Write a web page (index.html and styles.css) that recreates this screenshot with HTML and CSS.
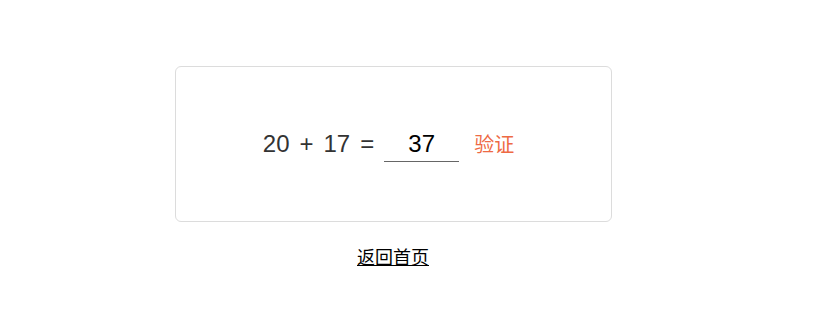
FILE: index.html
```html
<!DOCTYPE html>
<html lang="zh-CN">
<head>
<meta charset="utf-8">
<title>验证</title>
<link rel="stylesheet" href="styles.css">
</head>
<body>
<main class="page">
  <section class="card">
    <form class="captcha" onsubmit="return false;">
      <span class="term">20</span>
      <span class="op">+</span>
      <span class="term">17</span>
      <span class="op">=</span>
      <input class="answer" type="text" value="37">
      <button class="verify" type="submit">验证</button>
    </form>
  </section>
  <a class="home" href="#">返回首页</a>
</main>
</body>
</html>
```

FILE: styles.css
```css
html, body {
  margin: 0;
  padding: 0;
  background: #fff;
}

body {
  font-family: "Liberation Sans", "Noto Sans CJK SC", Arial, sans-serif;
}

.page {
  width: 786px;
  padding-top: 66px;
  display: flex;
  flex-direction: column;
  align-items: center;
}

.card {
  box-sizing: border-box;
  width: 437px;
  height: 156px;
  border: 1px solid #dcdcdc;
  border-radius: 6px;
  padding-top: 3px;
  display: flex;
  align-items: center;
  justify-content: center;
}

.captcha {
  display: flex;
  align-items: baseline;
  gap: 0;
  margin: 0;
  font-size: 24px;
  color: #333;
}

.term,
.op {
  line-height: 28px;
}

.term + .op,
.op + .term {
  margin-left: 10px;
}

.answer {
  box-sizing: border-box;
  width: 75px;
  margin-left: 10px;
  padding: 0 0 3px;
  border: none;
  border-bottom: 1px solid #666;
  background: transparent;
  font-family: "Liberation Sans", Arial, sans-serif;
  font-size: 24px;
  line-height: 28px;
  color: #000;
  text-align: center;
  outline: none;
}

.verify {
  margin-left: 15px;
  padding: 0 9px 0 0;
  border: none;
  background: transparent;
  font-family: "Noto Sans CJK SC", sans-serif;
  font-size: 20px;
  line-height: 28px;
  color: #ee6a44;
  cursor: pointer;
}

.home {
  margin-top: 22px;
  font-family: "Noto Sans CJK SC", sans-serif;
  font-size: 18px;
  line-height: 24px;
  color: #000;
  text-decoration: underline;
}
```
